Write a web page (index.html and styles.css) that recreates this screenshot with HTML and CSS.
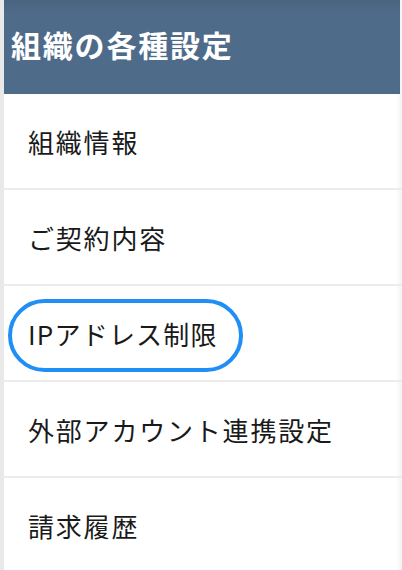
FILE: index.html
```html
<html>
    <head>
        <meta charset="utf-8">
        <link rel="stylesheet" href="styles.css">
    </head>
    <body>
        <div class="page">
            <div class="header">組織の各種設定</div>
            <div class="menu">
                <div class="item">組織情報</div>
                <div class="item">ご契約内容</div>
                <div class="item marked">IPアドレス制限<span class="ring"></span></div>
                <div class="item">外部アカウント連携設定</div>
                <div class="item">請求履歴</div>
            </div>
        </div>
    </body>
</html>
```

FILE: styles.css
```css
body {
    margin: 0;
    background: #ffffff;
    font-family: "Noto Sans CJK JP", "Noto Sans", sans-serif;
}
.page {
    width: 402px;
    height: 570px;
    overflow: hidden;
    border-left: 4px solid #e9e9e9;
    box-sizing: border-box;
    background: linear-gradient(to right, #ffffff 392px, #f3f3f3 398px);
}
.header {
    height: 94px;
    background: linear-gradient(to bottom, #4a6480 0px, #4f6b8a 14px, #4f6b8a 100%);
    color: #ffffff;
    font-size: 30px;
    letter-spacing: 1.8px;
    font-weight: bold;
    display: flex;
    align-items: center;
    padding-left: 7px;
    padding-bottom: 6px;
    box-sizing: border-box;
    margin-right: 2px;
}
.item {
    position: relative;
    height: 94px;
    border-bottom: 2px solid #ececec;
    display: flex;
    align-items: center;
    padding-left: 24px;
    font-size: 26px;
    letter-spacing: 1.8px;
    color: #1a1a1a;
}
.marked {
    letter-spacing: 1.2px;
}
.ring {
    position: absolute;
    left: 4px;
    top: 13px;
    width: 235px;
    height: 73px;
    border: 4px solid #1f8ff5;
    border-radius: 40px;
    box-sizing: border-box;
}
```
